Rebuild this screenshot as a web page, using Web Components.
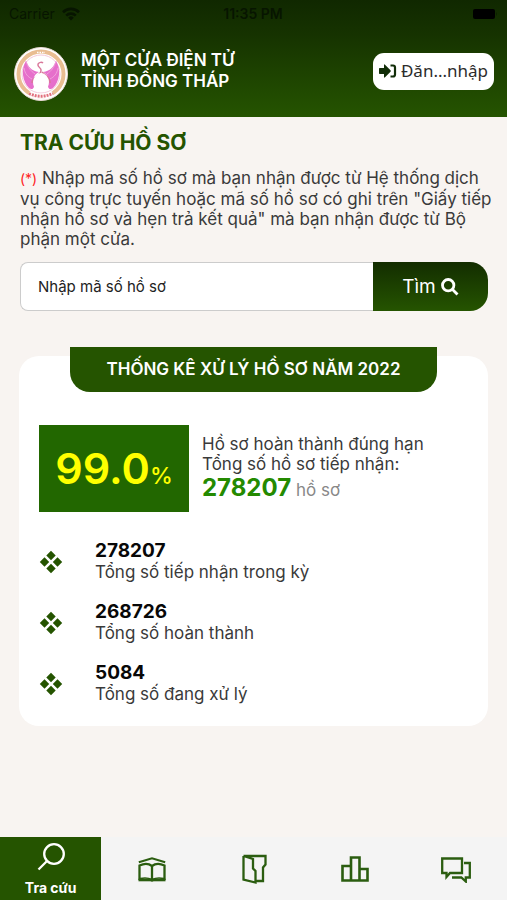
<!DOCTYPE html>
<html lang="vi">
<head>
<meta charset="utf-8">
<meta name="viewport" content="width=device-width, initial-scale=1">
<title>Một cửa điện tử tỉnh Đồng Tháp</title>
<style>
html, body { margin: 0; }
body { font-family: Inter, "Noto Sans", sans-serif; background: #f8f4f1; color: #3a3a3a; }
</style>
</head>
<body>
<portal-app></portal-app>
<script>
const define = (name, html) => {
  const template = document.createElement('template');
  template.innerHTML = '<style>*{box-sizing:border-box}:host([hidden]){display:none}</style>' + html;
  customElements.define(name, class extends HTMLElement {
    constructor() {
      super();
      this.attachShadow({ mode: 'open' }).append(template.content.cloneNode(true));
    }
  });
};

define('status-bar', `
<style>
:host { display: grid; grid-template-columns: 1fr auto 1fr; align-items: center; height: 28px; padding: 0 10px 0 9px; color: #071500; font-size: 14px; line-height: 20px; }
.carrier { display: flex; align-items: center; gap: 7px; }
.time { font-weight: 600; }
.battery { justify-self: end; }
svg { display: block; }
</style>
<span class="carrier">Carrier
  <svg width="18" height="14" viewBox="0 0 18 14" fill="none" stroke="currentColor" stroke-width="2.6"><path d="M1 5.2a11.4 11.4 0 0 1 16 0M4.2 8.6a6.8 6.8 0 0 1 9.6 0"/><path d="M9 13.4 6.2 10.7a4 4 0 0 1 5.600 0z" fill="currentColor" stroke="none"/></svg>
</span>
<span class="time">11:35 PM</span>
<svg class="battery" width="26" height="12" viewBox="0 0 26 12" fill="currentColor"><rect x="2" y="1" width="22" height="10" rx="2" fill="#000"/><path d="M25 4v4q1-.8 1-2t-1-2" opacity=".5"/></svg>
`);

define('province-emblem', `
<style>:host { display: block; } svg { display: block; }</style>
<svg width="54" height="54" viewBox="0 0 54 54" aria-hidden="true">
  <circle cx="27" cy="27" r="26.500" fill="#fff" stroke="#e9d9d4"/>
  <circle cx="27" cy="27" r="22.500" fill="none" stroke="#e9bd92" stroke-width="4"/>
  <circle cx="27" cy="27" r="19" fill="#fff" stroke="#f4cadb"/>
  <path d="M12 14C7 22 8 34 15 41c3 2 4 1 5-1-2-7 0-13 5-15C17 24 14 19 12 14z" fill="#e66fcb"/>
  <path d="M42 14c5 8 4 20-3 27-3 2-4 1-5-1 2-7 0-13-5-15 8-1 11-6 13-11z" fill="#e66fcb"/>
  <path d="M12 14c2 7 5 10 9 13M10 21c1 6 4 9 8 11M42 14c-2 7-5 10-9 13M44 21c-1 6-4 9-8 11" fill="none" stroke="#f0a2dc"/>
  <path d="M18 36c0-7 8-6 9-12 1-4-4-3-3-7 1-2 4-2 5-1M36 36c0-7-5-7-8-11" fill="none" stroke="#d9779a" stroke-width="1.500"/>
  <ellipse cx="27" cy="35" rx="7.800" ry="9" fill="#fff"/>
  <path d="M15 46.500q12 5.500 24 0" fill="none" stroke="#fff" stroke-width="5"/>
  <path d="M15 46.500q12 5.500 24 0" fill="none" stroke="#e2707e" stroke-width="3" stroke-dasharray="2 1"/>
  <path d="M23 5.500h8" stroke="#fff" stroke-width="1.500" stroke-dasharray="1.500 1"/>
</svg>
`);

define('app-header', `
<style>
:host { display: block; height: 117px; background: linear-gradient(#102800 0, #163300 30%, #255400 100%); }
.bar { display: flex; align-items: center; gap: 13px; padding: 19px 13px 0 14px; }
h1 { flex: 1; margin: 0 0 6px; color: #fff; font-size: 17px; line-height: 21px; font-weight: 600; }
button { display: flex; align-items: center; justify-content: center; gap: 4px; width: 121px; height: 37px; margin: 0 0 6px; padding: 0 0 0; border: 0; border-radius: 11px; background: #fff; color: #2c2c2c; font: 17px/24px "Noto Sans", sans-serif; }
svg { flex: none; }
</style>
<status-bar></status-bar>
<div class="bar">
  <province-emblem></province-emblem>
  <h1>MỘT CỬA ĐIỆN TỬ<br>TỈNH ĐỒNG THÁP</h1>
  <button type="button">
    <svg width="18" height="16" viewBox="0 0 18 16" aria-hidden="true"><path d="M0 5.700Q0 5 .7 5H5V2.200Q5 .8 6 1.700l5.500 5.600q.7.700 0 1.400L6 14.300q-1 .9-1-.5V11H.7Q0 11 0 10.300z" fill="#112d08"/><path d="M11.500 2.500H14q2 0 2 2v7q0 2-2 2h-2.500" fill="none" stroke="#112d08" stroke-width="2.200"/></svg>
    <span>Đăn...nhập</span>
  </button>
</div>
`);

define('lookup-form', `
<style>
:host { display: block; padding: 13px 19px 0 20px; }
h2 { margin: 0; color: #255400; font-size: 21px; line-height: 26px; font-weight: 700; }
p { margin: 12px -8px 13px 0; font-size: 17px; line-height: 20px; }
.star { color: #f22; font-size: 14px; }
form { display: flex; height: 49px; }
input { flex: 1; min-width: 0; padding: 0 17px; border: 1px solid #ccc; border-right: 0; border-radius: 8px 0 0 8px; background: #fff; color: #222; font: 15px/20px Inter, "Noto Sans", sans-serif; outline: 0; }
input::placeholder { color: #222; opacity: 1; }
button { display: flex; align-items: center; justify-content: center; gap: 5px; width: 115px; border: 0; padding: 0; border-radius: 0 18px 18px 0; background: linear-gradient(#132d00, #255400); color: #fff; font: 19px/24px Inter, "Noto Sans", sans-serif; }
</style>
<h2>TRA CỨU HỒ SƠ</h2>
<p><span class="star">(*)</span> <span>Nhập mã số hồ sơ mà bạn nhận được từ Hệ thống dịch vụ công trực tuyến hoặc mã số hồ sơ có ghi trên "Giấy tiếp nhận hồ sơ và hẹn trả kết quả" mà bạn nhận được từ Bộ phận một cửa.</span></p>
<form>
  <input type="text" aria-label="Nhập mã số hồ sơ" placeholder="Nhập mã số hồ sơ">
  <button type="button"><span>Tìm</span><svg width="18" height="18" viewBox="0 0 18 18" fill="none" stroke="#fff" stroke-width="2.800" aria-hidden="true"><circle cx="7.200" cy="7.200" r="5.700"/><path d="m11.300 11.300 5.200 5.200"/></svg></button>
</form>
`);

define('stat-item', `
<style>
:host { display: grid; grid-template-columns: 56px 1fr; align-items: center; }
.number { display: block; color: #080808; font-size: 19px; line-height: 22px; font-weight: 700; }
.label { display: block; font-size: 17px; line-height: 21px; }
svg { display: block; }
</style>
<svg width="24" height="24" viewBox="0 0 24 24" fill="#255400" aria-hidden="true"><path d="m12 .8 4.700 4.700L12 10.200 7.300 5.500zM12 13.800l4.700 4.700-4.700 4.700-4.700-4.700zM5.500 7.300l4.700 4.700-4.700 4.700L.8 12zM18.500 7.300l4.700 4.700-4.700 4.700-4.700-4.700z"/></svg>
<div><span class="number"><slot name="number"></slot></span><span class="label"><slot></slot></span></div>
`);

define('stats-card', `
<style>
:host { display: block; padding: 45px 19px 0; }
section { display: flex; flex-direction: column; padding-bottom: 21px; border-radius: 20px; background: #fff; }
h2 { align-self: center; width: calc(100% - 102px); margin: -9px 0 0; padding: 12px 0; border-radius: 0 0 20px 20px; background: #255400; color: #fff; text-align: center; font-size: 17px; line-height: 21px; font-weight: 600; }
.summary { display: flex; gap: 13px; padding: 33px 20px 0; }
.rate { display: flex; justify-content: center; align-items: baseline; flex: none; width: 150px; height: 87px; background: #226700; color: #ff0; line-height: 87px; font-size: 43px; font-weight: 600; }
.rate small { font-size: 23px; font-weight: 500; }
.text { padding-top: 9px; font-size: 17px; line-height: 20px; }
.text p { margin: 0; }
.text .total { color: #888; line-height: 28px; }
.total strong { color: #248a00; font-size: 24px; font-weight: 700; }
.list { display: flex; flex-direction: column; gap: 18px; padding: 28px 20px 0; }
</style>
<section>
  <h2><slot name="title"></slot></h2>
  <div class="summary">
    <div class="rate"><span>99.0</span><small>%</small></div>
    <div class="text"><p>Hồ sơ hoàn thành đúng hạn</p><p>Tổng số hồ sơ tiếp nhận:</p><p class="total"><strong>278207</strong> hồ sơ</p></div>
  </div>
  <div class="list"><slot></slot></div>
</section>
`);

define('nav-tab', `
<style>
:host { display: block; flex: 1; }
a { display: flex; flex-direction: column; align-items: center; justify-content: center; gap: 8px; height: 100%; color: #2b5d10; text-decoration: none; font-size: 14px; line-height: 18px; font-weight: 700; }
:host([active]) a { padding-top: 3px; background: #255400; color: #fff; }
</style>
<a href="#"><slot name="icon"></slot><slot></slot></a>
`);

define('tab-bar', `
<style>
:host { display: flex; height: 63px; background: #f4f4f4; }
svg { display: block; fill: none; stroke: currentColor; stroke-width: 2.300; }
</style>
<nav-tab active>
  <svg slot="icon" width="28" height="28" viewBox="0 0 28 28"><circle cx="17" cy="11" r="9.800"/><path d="m10 18-8.500 8.500"/></svg>Tra cứu
</nav-tab>
<nav-tab aria-label="Thủ tục"><svg slot="icon" width="28" height="28" viewBox="0 0 28 28"><path d="M.8 7.200 14 3.200l13.200 4" stroke-width="2"/><path d="M1.500 25V10.500Q9 7 14 11q5-4 12.500-.5V25M14 11v15.500"/><path d="M.5 25h27" stroke-width="2.600"/><path d="M2 23.500q7-1.500 12 1 5-2.500 12-1" stroke-width="1.500"/></svg></nav-tab>
<nav-tab aria-label="Tài liệu"><svg slot="icon" width="28" height="30" viewBox="0 0 28 30"><path d="M3.500 2h22v8.500L23 13.500V27h-7M3.500 2v23.500l12 3V17L13 14.500V5L3.500 2"/></svg></nav-tab>
<nav-tab aria-label="Thống kê"><svg slot="icon" width="28" height="28" viewBox="0 0 28 28"><path d="M1.500 11H10v14.500H1.500zM10 2.500h8.500v23H10zM18.500 14h8v11.500h-8z" stroke-width="2.600"/></svg></nav-tab>
<nav-tab aria-label="Góp ý"><svg slot="icon" width="30" height="28" viewBox="0 0 30 28"><path d="M1.200 3.500H21V18H9l-3.500 4V18H1.200zM23 8h5.800v14.500h-4V26.500l-4.500-4H11"/></svg></nav-tab>
`);

define('portal-app', `
<style>
:host { display: flex; flex-direction: column; min-height: 100vh; }
main { flex: 1; }
</style>
<app-header></app-header>
<main>
  <lookup-form></lookup-form>
  <stats-card>
    <span slot="title">THỐNG KÊ XỬ LÝ HỒ SƠ NĂM 2022</span>
    <stat-item><span slot="number">278207</span>Tổng số tiếp nhận trong kỳ</stat-item>
    <stat-item><span slot="number">268726</span>Tổng số hoàn thành</stat-item>
    <stat-item><span slot="number">5084</span>Tổng số đang xử lý</stat-item>
  </stats-card>
</main>
<tab-bar></tab-bar>
`);
</script>
</body>
</html>
